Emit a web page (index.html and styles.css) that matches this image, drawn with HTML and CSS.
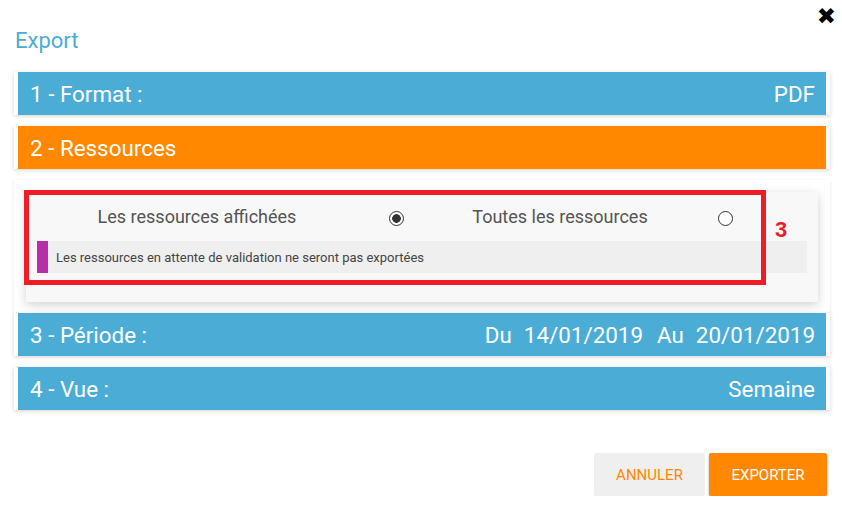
FILE: index.html
```html
<!DOCTYPE html>
<html lang="fr">
<head>
<meta charset="utf-8">
<title>Export</title>
<link rel="stylesheet" href="styles.css">
</head>
<body>
<div class="dialog">
  <button class="close" type="button" aria-label="Fermer">&#10006;</button>
  <h1 class="title">Export</h1>

  <div class="card">
    <div class="bar bar-blue"><span>1 - Format :</span><span>PDF</span></div>
  </div>

  <div class="card">
    <div class="bar bar-orange"><span>2 - Ressources</span></div>
  </div>

  <div class="card card-body">
    <div class="panel">
      <div class="choices">
        <label class="choice-label" for="r1">Les ressources affichées</label>
        <span class="choice-radio"><input class="radio" type="radio" id="r1" name="res" checked></span>
        <label class="choice-label" for="r2">Toutes les ressources</label>
        <span class="choice-radio"><input class="radio" type="radio" id="r2" name="res"></span>
      </div>
      <div class="note"><span class="note-mark"></span><span class="note-text">Les ressources en attente de validation ne seront pas exportées</span></div>
      <div class="annot-box"></div>
      <span class="annot-num">3</span>
    </div>
  </div>

  <div class="card">
    <div class="bar bar-blue"><span>3 - Période :</span><span class="dates"><span class="date"><span>Du</span><span>14/01/2019</span></span><span class="date"><span>Au</span><span>20/01/2019</span></span></span></div>
  </div>

  <div class="card">
    <div class="bar bar-blue"><span>4 - Vue :</span><span>Semaine</span></div>
  </div>

  <div class="actions">
    <button class="btn btn-cancel" type="button">Annuler</button>
    <button class="btn btn-export" type="button">Exporter</button>
  </div>
</div>
</body>
</html>
```

FILE: styles.css
```css
* { box-sizing: border-box; }

html, body {
  margin: 0;
  padding: 0;
  background: #ffffff;
}

body {
  font-family: Roboto, "Liberation Sans", Arial, sans-serif;
  color: #444;
}

.dialog {
  position: relative;
  width: 842px;
  padding: 28px 12px 0 14px;
}

.close {
  position: absolute;
  top: 3px;
  right: 6px;
  border: 0;
  background: none;
  padding: 0;
  font-family: "DejaVu Sans", sans-serif;
  font-size: 23px;
  line-height: 26px;
  color: #000;
  cursor: pointer;
}

.title {
  margin: 0 0 18px 1px;
  font-size: 22px;
  line-height: 26px;
  font-weight: 400;
  color: #4badd6;
}

.card {
  width: 816px;
  padding: 0 4px;
  background: #fff;
  box-shadow: 0 1px 4px rgba(0, 0, 0, 0.18);
  margin-bottom: 11px;
}

.bar {
  height: 43px;
  display: flex;
  align-items: center;
  justify-content: space-between;
  padding: 0 11px 0 12px;
  font-size: 22.4px;
  color: #fff;
}

.bar-blue { background: #4badd6; }
.bar-orange { background: #ff8800; }

.dates {
  display: flex;
  gap: 14px;
}

.date {
  display: flex;
  gap: 12px;
}

.card-body {
  padding: 12px 12px 11px 12px;
  margin-bottom: 0;
  box-shadow: 0 1px 3px rgba(0, 0, 0, 0.12);
}

.panel {
  position: relative;
  height: 110px;
  background: #f8f8f8;
  padding: 13px 11px 0 11px;
  box-shadow: 0 3px 10px rgba(0, 0, 0, 0.18);
}

.choices {
  display: grid;
  grid-template-columns: 320px 78px 250px 80px;
  align-items: center;
  height: 24px;
}

.choice-label {
  text-align: center;
  font-size: 18px;
  line-height: 24px;
  color: #555;
}

.choice-radio {
  display: flex;
  justify-content: center;
  align-items: center;
  padding-top: 3px;
}

.radio {
  -webkit-appearance: none;
  appearance: none;
  margin: 0;
  width: 15px;
  height: 15px;
  border-radius: 50%;
  border: 1px solid #333;
  background: #fff;
}

.radio:checked {
  background: radial-gradient(circle, #333 0 4px, #fff 4.6px);
}

.note {
  display: flex;
  align-items: center;
  height: 32px;
  margin-top: 12px;
  background: #efefef;
}

.note-mark {
  width: 11px;
  height: 32px;
  background: #b62fa8;
}

.note-text {
  margin-left: 8px;
  font-size: 13px;
  color: #444;
}

.annot-box {
  position: absolute;
  left: -2px;
  top: -2px;
  width: 742px;
  height: 95px;
  border: 5px solid #ee1c25;
}

.annot-num {
  position: absolute;
  left: 749px;
  top: 25px;
  font-family: "Liberation Sans", Arial, sans-serif;
  font-weight: 700;
  font-size: 22px;
  color: #ee1c25;
}

.actions {
  display: flex;
  justify-content: flex-end;
  gap: 4px;
  margin-top: 43px;
  padding-right: 3px;
}

.btn {
  height: 43px;
  border: 0;
  border-radius: 2px;
  font-family: Roboto, "Liberation Sans", Arial, sans-serif;
  font-size: 15px;
  text-transform: uppercase;
  cursor: pointer;
}

.btn-cancel {
  width: 111px;
  background: #efefef;
  color: #ff8800;
}

.btn-export {
  width: 118px;
  background: #ff8800;
  color: #fff;
  box-shadow: 0 2px 3px rgba(0, 0, 0, 0.3);
}
```
